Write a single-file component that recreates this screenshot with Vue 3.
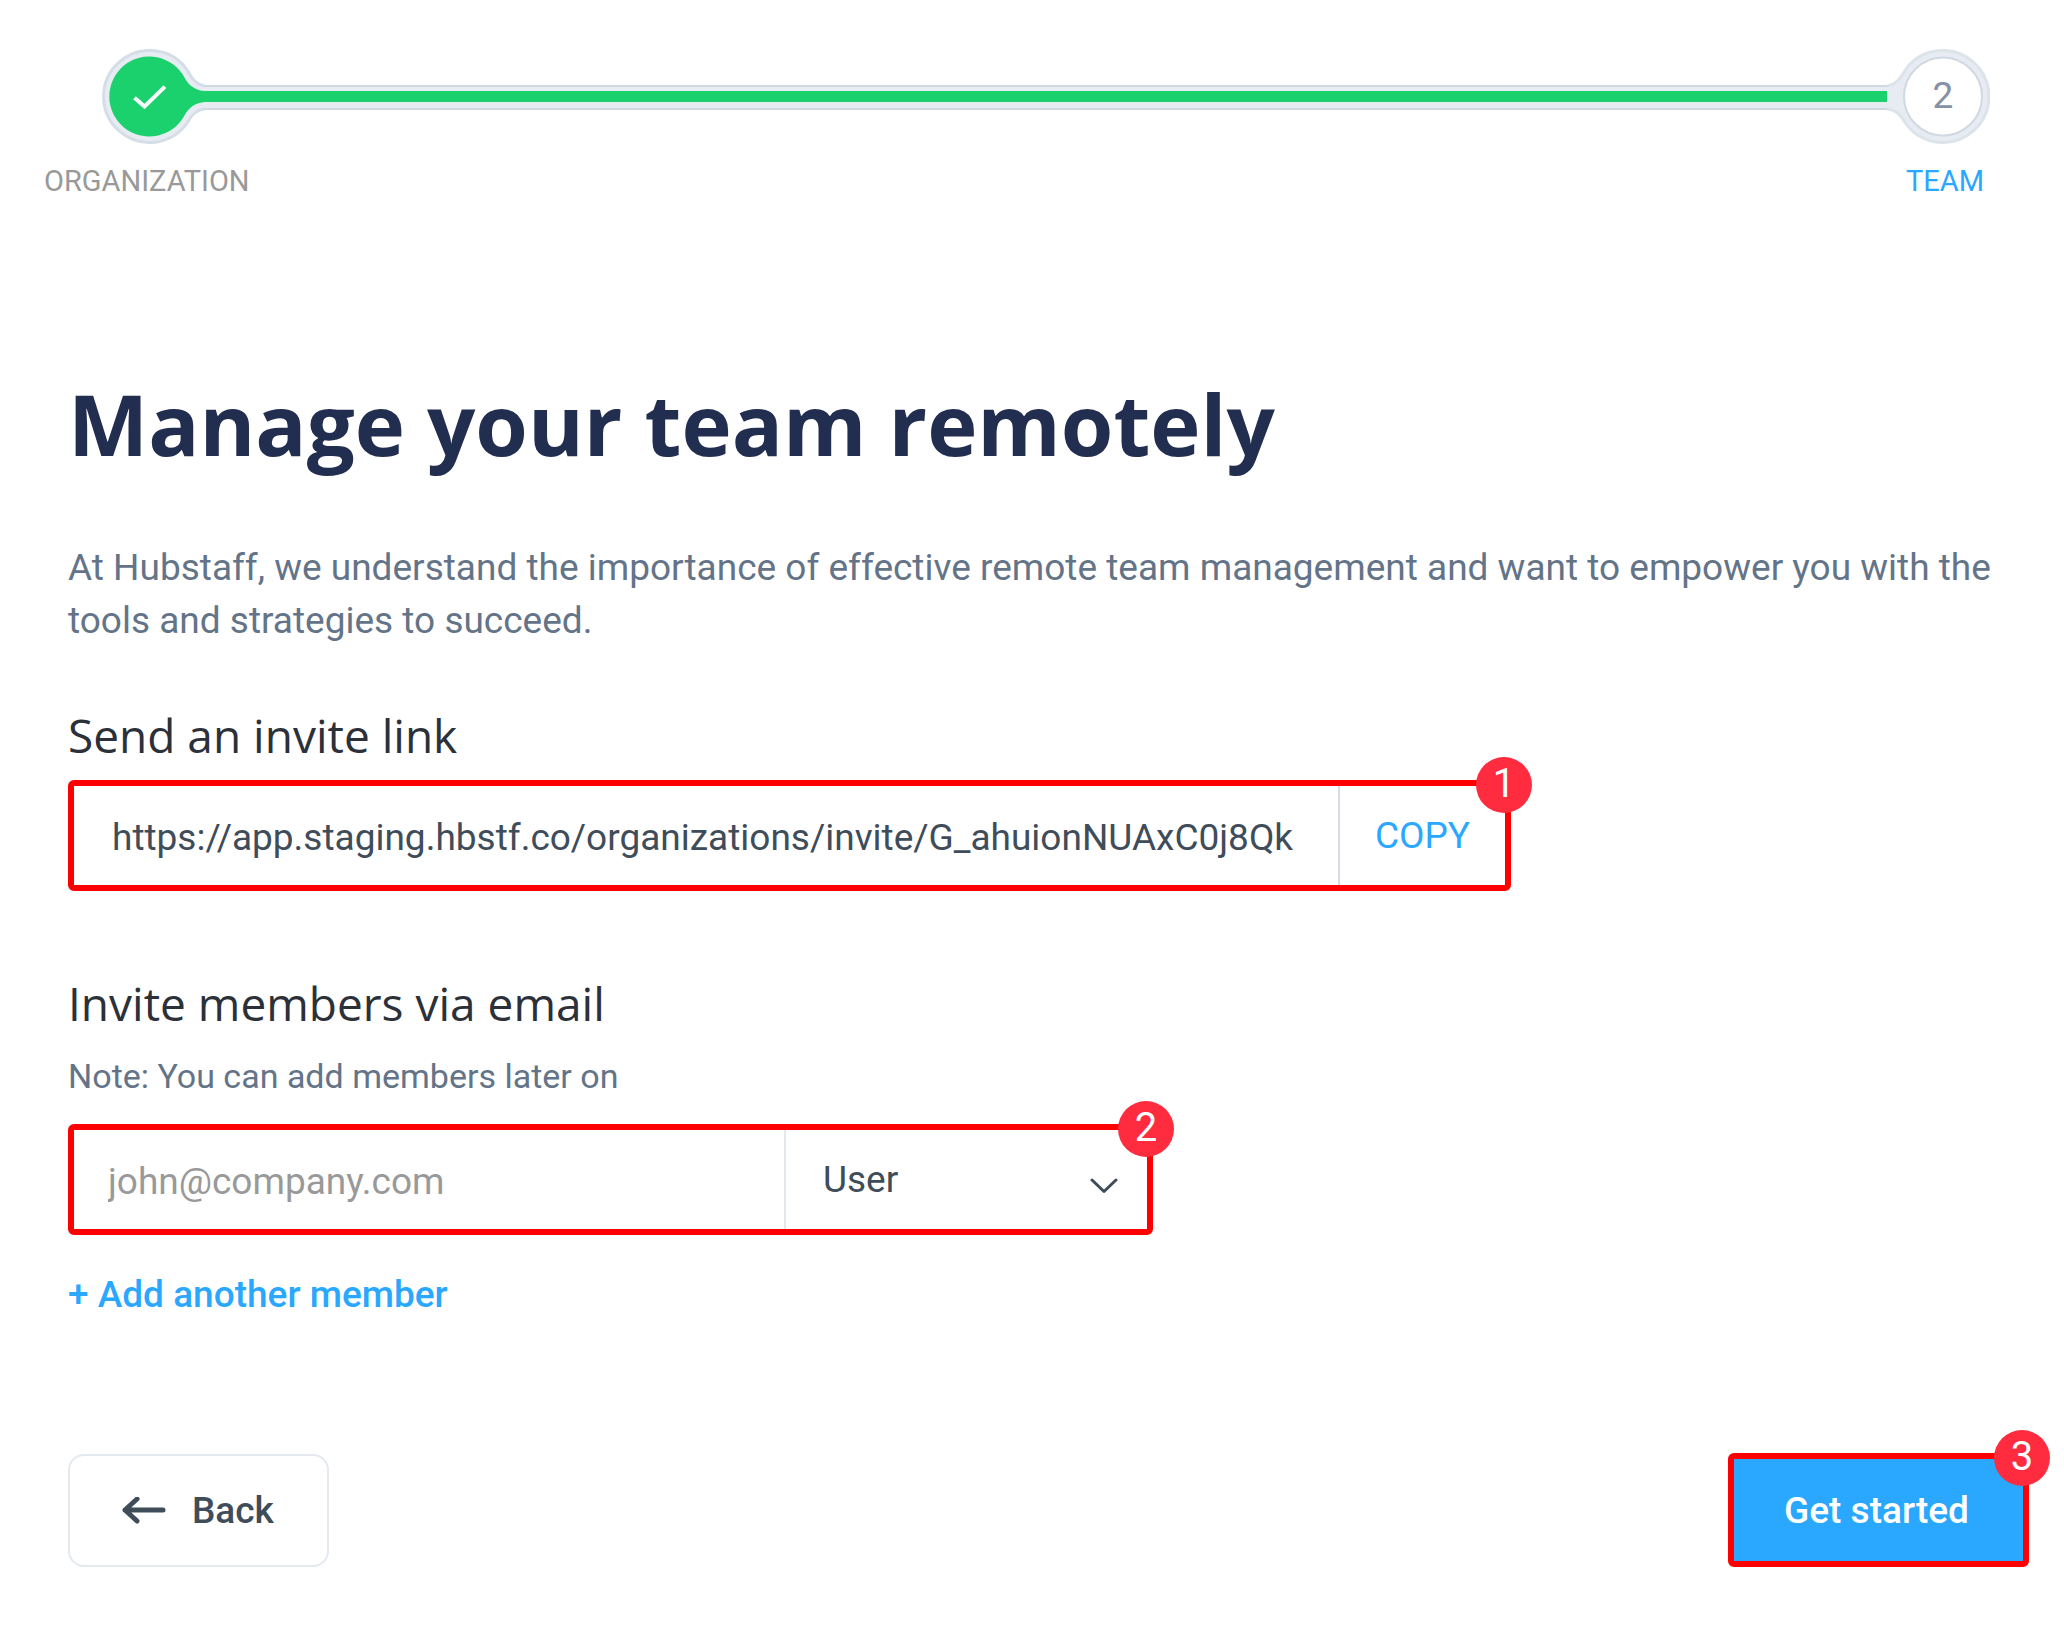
<script setup>
import { ref } from 'vue'

const inviteLink = ref('https://app.staging.hbstf.co/organizations/invite/G_ahuionNUAxC0j8Qk')
const members = ref([{ email: '', role: 'User' }])

function copyLink() {
  navigator.clipboard?.writeText(inviteLink.value)
}

function addMember() {
  members.value.push({ email: '', role: 'User' })
}
</script>

<template>
  <div class="page">
    <header class="stepper">
      <div class="rail">
        <svg class="marker" viewBox="0 0 103 96" aria-hidden="true">
          <path class="halo" d="M104 37C95 36.500 90 30 85.500 21.500A46 46 0 1 0 85.500 73.500C90 65 95 60 104 60" />
          <path class="done" d="M103 42C94 41.500 87 37 82.500 28.500A40 40 0 1 0 82.500 66.500C87 58 94 53.500 103 53Z" />
          <path class="tick" d="M34 50L42.500 57.500L61.500 39" />
        </svg>
        <div class="track"><div class="progress"></div></div>
        <svg class="marker" viewBox="0 0 103 96" aria-hidden="true">
          <path class="halo soft" d="M-1 37C8 36.500 13 30 18 21.500A46 46 0 1 1 18 73.500C13 65 8 60 -1 60" />
          <circle class="pending" cx="56" cy="47.500" r="39" />
          <text class="number" x="56" y="59" text-anchor="middle">2</text>
        </svg>
      </div>
      <div class="labels">
        <span>ORGANIZATION</span>
        <span class="current">TEAM</span>
      </div>
    </header>

    <main class="content">
      <h1>Manage your team remotely</h1>
      <p class="intro">
        At Hubstaff, we understand the importance of effective remote team management and want to empower you with the
        tools and strategies to succeed.
      </p>

      <section class="link-section">
        <h2><label for="invite-link">Send an invite link</label></h2>
        <div class="field link-field">
          <input id="invite-link" v-model="inviteLink" type="text" readonly />
          <button class="copy" type="button" @click="copyLink">COPY</button>
          <span class="badge">1</span>
        </div>
      </section>

      <section class="email-section">
        <h2><label for="email-0">Invite members via email</label></h2>
        <p class="note">Note: You can add members later on</p>
        <div v-for="(member, i) in members" :key="i" class="field email-field">
          <input :id="`email-${i}`" v-model="member.email" type="email" placeholder="john@company.com" />
          <div class="role">
            <select v-model="member.role" aria-label="Role">
              <option>User</option>
            </select>
            <svg class="chevron" viewBox="0 0 28 16" aria-hidden="true">
              <path d="M2 2L14 13.500L26 2" />
            </svg>
          </div>
          <span v-if="i === 0" class="badge">2</span>
        </div>
        <button class="add" type="button" @click="addMember">+ Add another member</button>
      </section>

      <footer class="actions">
        <button class="back" type="button">
          <svg class="arrow" viewBox="0 0 44 28" aria-hidden="true">
            <path d="M15 2L3 13L15 24M3 13H41" />
          </svg>
          Back
        </button>
        <div class="field start-field">
          <button class="start" type="button">Get started</button>
          <span class="badge">3</span>
        </div>
      </footer>
    </main>
  </div>
</template>

<style>
body {
  margin: 0;
  background: #fff;
}
</style>

<style scoped>
.page {
  box-sizing: border-box;
  padding: 49px 0 60px;
  font-family: Roboto, "Liberation Sans", sans-serif;
  font-size: 37px;
  line-height: 53px;
  color: #3f4c59;
}

.page * {
  box-sizing: border-box;
}

button,
input,
select {
  margin: 0;
  border: 0;
  border-radius: 0;
  background: none;
  font: inherit;
  color: inherit;
}

button {
  cursor: pointer;
}

/* Stepper */
.rail {
  display: flex;
  align-items: flex-start;
  padding: 0 74px 0 102px;
}

.marker {
  flex: none;
  width: 103px;
  height: 96px;
}

.halo {
  fill: #e6ecf1;
  stroke: #d5dee7;
  stroke-width: 3;
}

.soft {
  stroke: #dce4ea;
}

.done {
  fill: #1bd16d;
}

.tick {
  fill: none;
  stroke: #f4fdf8;
  stroke-width: 4;
  stroke-linecap: square;
}

.pending {
  fill: #fff;
  stroke: #d0d8e3;
  stroke-width: 2;
}

.number {
  font-size: 37px;
  fill: #8492a6;
}

.track {
  flex: 1;
  height: 25px;
  margin-top: 36px;
  padding: 4px 0 6px;
  border: solid #d0d8e3;
  border-width: 2px 0;
  background: #e6ecf1;
}

.progress {
  height: 11px;
  background: #1bd16d;
}

.labels {
  display: flex;
  justify-content: space-between;
  margin-top: 18px;
  padding: 0 80px 0 44px;
  font-size: 29px;
  line-height: 36px;
  color: #999;
}

.current {
  color: #2aa7ff;
}

/* Content */
.content {
  padding: 174px 35px 0 68px;
}

h1,
h2 {
  margin: 0;
  font-family: "Open Sans", "Noto Sans", sans-serif;
}

h1 {
  font-size: 85px;
  line-height: 100px;
  font-weight: 700;
  color: #222e50;
}

h2 {
  font-size: 46px;
  line-height: 60px;
  font-weight: 400;
  color: #2c3038;
}

.intro {
  margin: 68px 0 0;
  color: #647488;
}

.link-section {
  margin-top: 58px;
}

.email-section {
  margin-top: 82px;
}

.note {
  margin: 22px 0 0;
  font-size: 34px;
  line-height: 42px;
  color: #647488;
}

/* Highlighted fields */
.field {
  position: relative;
  display: flex;
  max-width: 100%;
  height: 111px;
  border: 6px solid #f00;
  border-radius: 6px;
}

.field input {
  flex: 1;
  min-width: 0;
  padding: 4px 28px 0 38px;
  outline: 0;
}

.link-field {
  width: 1443px;
  margin-top: 15px;
}

.copy {
  flex: none;
  width: 167px;
  padding: 0;
  border-left: 2px solid #d7dbe4;
  color: #2aa7ff;
}

.email-field {
  width: 1085px;
  margin-top: 27px;
}

.field input::placeholder {
  color: #999;
  opacity: 1;
}

.email-field input {
  padding-left: 34px;
}

.role {
  position: relative;
  flex: none;
  width: 363px;
  border-left: 2px solid #e3e8ed;
}

.role select {
  width: 100%;
  height: 100%;
  padding: 0 72px 0 37px;
  appearance: none;
  outline: 0;
}

.chevron {
  position: absolute;
  top: 48px;
  right: 29px;
  width: 28px;
  height: 16px;
  pointer-events: none;
}

.chevron path {
  fill: none;
  stroke: #3f4c59;
  stroke-width: 3;
  stroke-linecap: round;
  stroke-linejoin: round;
}

.badge {
  position: absolute;
  top: -29px;
  right: -27px;
  width: 56px;
  height: 56px;
  border-radius: 50%;
  background: #ff2c40;
  font-size: 40px;
  line-height: 54px;
  text-align: center;
  color: #fff;
}

.add {
  display: block;
  margin-top: 33px;
  padding: 0;
  font-weight: 500;
  color: #2aa7ff;
}

/* Actions */
.actions {
  display: flex;
  justify-content: space-between;
  align-items: flex-end;
  margin-top: 132px;
  font-weight: 500;
}

.back {
  display: flex;
  align-items: center;
  gap: 26px;
  height: 113px;
  padding: 0 53px 0 52px;
  border: 2px solid #e3e9ef;
  border-radius: 16px;
}

.arrow {
  width: 44px;
  height: 28px;
}

.arrow path {
  fill: none;
  stroke: #3f4c59;
  stroke-width: 5;
  stroke-linecap: round;
  stroke-linejoin: round;
}

.start-field {
  width: 301px;
  height: 114px;
}

.start {
  flex: 1;
  padding: 0 4px 0 0;
  background: #2aa7ff;
  color: #fff;
}

.start-field .badge {
  font-weight: 400;
}
</style>
